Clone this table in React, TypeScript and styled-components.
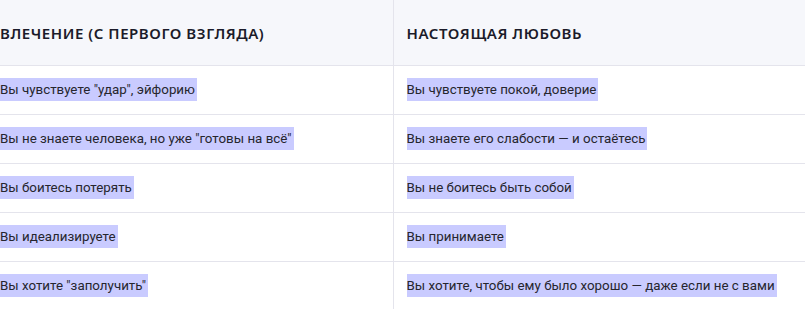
import React from "react";
import styled, { createGlobalStyle } from "styled-components";

const rows: [string, string][] = [
  ['Вы чувствуете "удар", эйфорию', "Вы чувствуете покой, доверие"],
  ['Вы не знаете человека, но уже "готовы на всё"', "Вы знаете его слабости — и остаётесь"],
  ["Вы боитесь потерять", "Вы не боитесь быть собой"],
  ["Вы идеализируете", "Вы принимаете"],
  ['Вы хотите "заполучить"', "Вы хотите, чтобы ему было хорошо — даже если не с вами"],
];

const GlobalStyle = createGlobalStyle`
  html, body {
    margin: 0;
    background: #ffffff;
    font-family: "Noto Sans", "Open Sans", sans-serif;
  }
`;

const Page = styled.div`
  width: 805px;
  height: 309px;
  overflow: hidden;
`;

const Table = styled.table`
  width: 100%;
  border-collapse: collapse;
  table-layout: fixed;
`;

const HeadCell = styled.th<{ $first?: boolean }>`
  height: 65px;
  padding: 0 13px 0 ${({ $first }) => ($first ? "0" : "13px")};
  background: #f6f7fb;
  border-bottom: 1px solid #e4e4ec;
  border-left: ${({ $first }) => ($first ? "none" : "1px solid #e4e4ec")};
  text-align: left;
  font-size: 15px;
  font-weight: 600;
  letter-spacing: 0.55px;
  color: #1b1b2a;
  text-transform: uppercase;
  white-space: nowrap;
`;

const Cell = styled.td<{ $first?: boolean }>`
  padding: 12px 13px 13px ${({ $first }) => ($first ? "0" : "13px")};
  border-bottom: 1px solid #e4e4ec;
  border-left: ${({ $first }) => ($first ? "none" : "1px solid #e4e4ec")};
  font-family: Roboto, "Noto Sans", sans-serif;
  font-size: 13.35px;
  color: #26262e;
  white-space: nowrap;
`;

const Mark = styled.span`
  display: inline-block;
  line-height: 23px;
  padding-right: 2px;
  background: #c9cbff;
`;

export default function App() {
  return (
    <Page>
      <GlobalStyle />
      <Table>
        <colgroup>
          <col style={{ width: 393 }} />
          <col />
        </colgroup>
        <thead>
          <tr>
            <HeadCell $first>Влечение (с первого взгляда)</HeadCell>
            <HeadCell>Настоящая любовь</HeadCell>
          </tr>
        </thead>
        <tbody>
          {rows.map(([a, b]) => (
            <tr key={a}>
              <Cell $first>
                <Mark>{a}</Mark>
              </Cell>
              <Cell>
                <Mark>{b}</Mark>
              </Cell>
            </tr>
          ))}
        </tbody>
      </Table>
    </Page>
  );
}
